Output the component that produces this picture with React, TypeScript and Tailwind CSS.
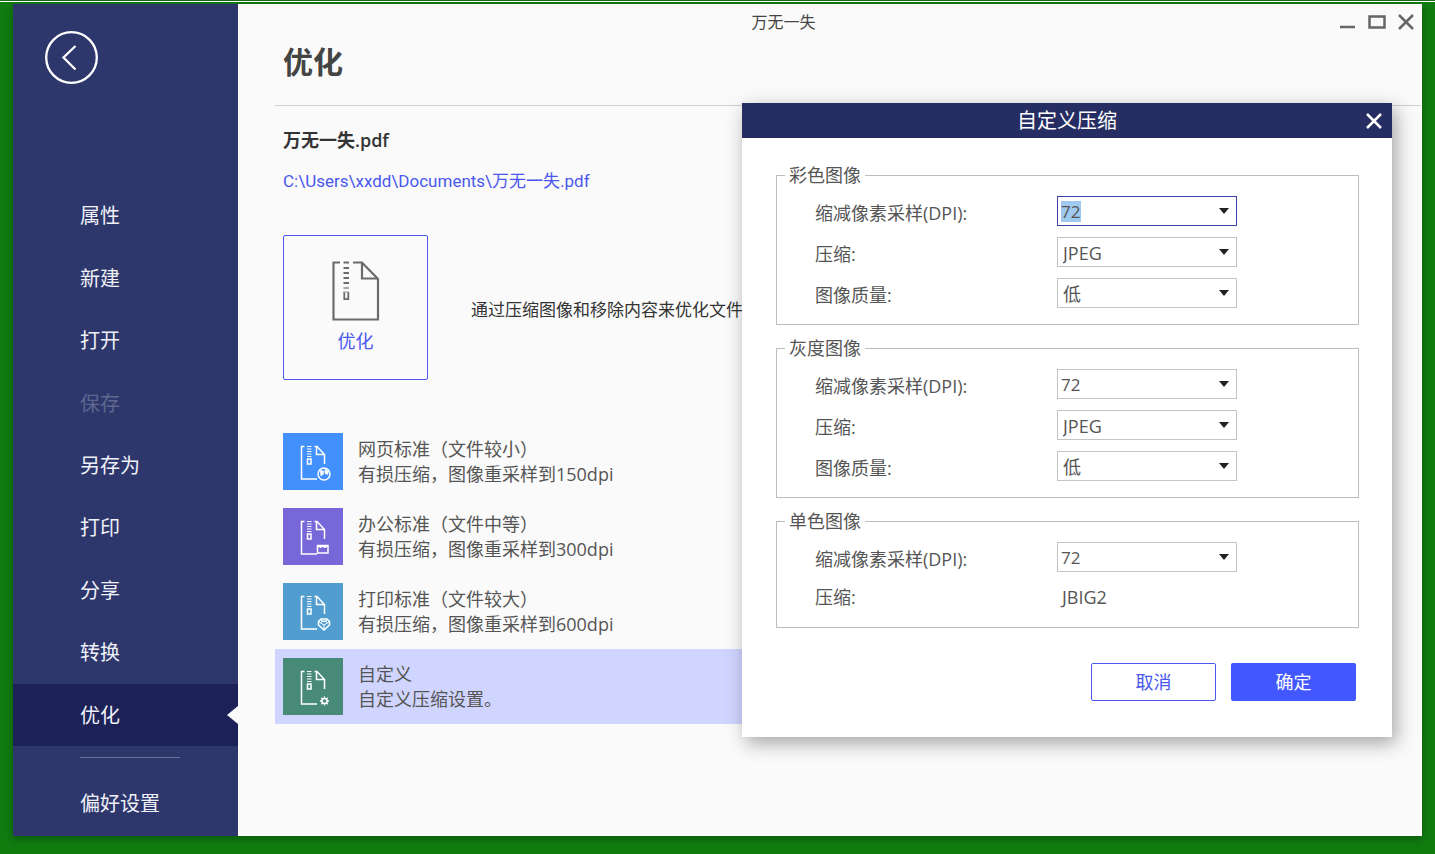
import { useState } from 'react'
import type { ReactNode } from 'react'

const NAV_ITEMS = ['属性', '新建', '打开', '保存', '另存为', '打印', '分享', '转换', '优化']

const PRESETS = [
  { id: 'web', title: '网页标准（文件较小）', desc: '有损压缩，图像重采样到150dpi', tile: 'bg-[#4190fc]' },
  { id: 'office', title: '办公标准（文件中等）', desc: '有损压缩，图像重采样到300dpi', tile: 'bg-[#7767d9]' },
  { id: 'print', title: '打印标准（文件较大）', desc: '有损压缩，图像重采样到600dpi', tile: 'bg-[#529dd0]' },
  { id: 'custom', title: '自定义', desc: '自定义压缩设置。', tile: 'bg-[#488a78]' },
]

const BADGES: Record<string, ReactNode> = {
  web: (
    <>
      <circle cx="41" cy="41" r="6" />
      <path d="M37 37.5l3.5.5v3L38 43zM42 36l3.5 2.5-1 3-2.5-1z" fill="#fff" strokeWidth="0.6" />
    </>
  ),
  office: (
    <>
      <rect x="34.5" y="37.5" width="10.5" height="7.5" />
      <path d="M34.5 38.5h10.5M37.5 38v2M42 38v2" />
    </>
  ),
  print: (
    <>
      <path d="M38 36h6l2.5 2.5V42L41 47l-5.500-5v-3.500z" />
      <path d="M36 39l5 3 5-3M41 42v4M38 37.500l6 1.500M44 37.500l-6 1.500" strokeWidth="1" />
    </>
  ),
  custom: (
    <>
      <circle cx="41.5" cy="43" r="2.5" />
      <path d="M41.5 38.500v2M41.5 45.500v2M37 43h2M44 43h2M38.300 39.800l1.400 1.400M43.300 44.800l1.400 1.400M44.700 39.800l-1.400 1.400M39.700 44.800l-1.400 1.400" strokeWidth="1.3" />
    </>
  ),
}

function PresetIcon({ id }: { id: string }) {
  return (
    <svg width="60" height="57" viewBox="0 0 60 57" fill="none" stroke="#fff" strokeWidth="1.5" aria-hidden="true">
      <path d="M21.5 13.5h-3V46H34" />
      <path d="M31.5 13.5H34l7.5 8V31M33.5 13.5v8h8" />
      <path d="M24 13.5h4.5M24 16h4.5M24 18.5h4.5M24 21h4.5M24 23.5h4.5" strokeWidth="1.2" />
      <rect x="24.5" y="26" width="3.5" height="5" />
      {BADGES[id]}
    </svg>
  )
}

function ZipFileIcon() {
  return (
    <svg width="48" height="60" viewBox="0 0 48 60" fill="none" stroke="#6b6b6b" strokeWidth="2.2" aria-hidden="true">
      <path d="M8 1.5H1.5v57H46V18L30 1.5h-9" />
      <path d="M30 1.5v16h16" />
      <path d="M11.5 1.5H17M11.5 7H17M11.5 12H17M11.5 17H17M11.5 22H17" />
      <path d="M11.5 27H17" stroke="#aaa" />
      <path d="M12.3 31v8M16.3 31v8M11.5 38.2H17" strokeWidth="1.8" />
      <path d="M11.5 31H17" stroke="#999" strokeWidth="1" />
    </svg>
  )
}

function Field({ id, label, options, active }: { id: string; label: string; options: string[]; active?: boolean }) {
  return (
    <div className="flex h-[30px] items-center">
      <label htmlFor={id} className="w-[242px] pt-1">{label}</label>
      <div className={`relative h-[30px] w-[180px] border bg-white ${active ? 'border-[#3d41a8]' : 'border-[#c3c3c3]'}`}>
        {active && <span className="absolute top-1 left-[3px] h-[21px] w-5 bg-[#9fc9ee]" />}
        <select id={id} className={`relative h-full w-full appearance-none bg-transparent pt-[2px] outline-none ${options[0] === '72' ? 'pl-[3px] text-[17px]' : 'pl-[5px]'}`}>
          {options.map(o => <option key={o}>{o}</option>)}
        </select>
        <svg className="pointer-events-none absolute top-[11px] right-[7px]" width="10" height="6" viewBox="0 0 10 6" aria-hidden="true">
          <path d="M0 0h10L5 6z" fill="#222" />
        </svg>
      </div>
    </div>
  )
}

function Group({ title, children }: { title: string; children: ReactNode }) {
  return (
    <fieldset className="border border-[#bdbdbd] pr-4 pb-4 pl-[38px]">
      <legend className="-ml-[30px] px-1 leading-[26px]">{title}</legend>
      <div className="flex flex-col gap-[11px] pt-2">{children}</div>
    </fieldset>
  )
}

function CompressDialog() {
  return (
    <div role="dialog" aria-label="自定义压缩" className="absolute top-[99px] right-[29px] w-[650px] bg-white text-[#555] shadow-[4px_6px_18px_rgba(0,0,0,0.35)]">
      <div className="flex h-[35px] items-center bg-[#262d63] pr-2 text-white">
        <h2 className="flex-1 pl-7 text-center text-[20px]">自定义压缩</h2>
        <button aria-label="关闭" className="flex h-6 w-5 items-center justify-center">
          <svg width="16" height="16" viewBox="0 0 16 16" fill="none" stroke="#fff" strokeWidth="2.5">
            <path d="M1 1l14 14M15 1L1 15" />
          </svg>
        </button>
      </div>
      <div className="flex flex-col gap-[10px] pt-6 pr-[33px] pl-[34px]">
        <Group title="彩色图像">
          <Field id="color-dpi" label="缩减像素采样(DPI):" options={['72', '150', '300']} active />
          <Field id="color-comp" label="压缩:" options={['JPEG', 'ZIP']} />
          <Field id="color-quality" label="图像质量:" options={['低', '中', '高']} />
        </Group>
        <Group title="灰度图像">
          <Field id="gray-dpi" label="缩减像素采样(DPI):" options={['72', '150', '300']} />
          <Field id="gray-comp" label="压缩:" options={['JPEG', 'ZIP']} />
          <Field id="gray-quality" label="图像质量:" options={['低', '中', '高']} />
        </Group>
        <Group title="单色图像">
          <Field id="mono-dpi" label="缩减像素采样(DPI):" options={['72', '150', '300']} />
          <div className="flex h-7 items-center">
            <span className="w-[242px]">压缩:</span>
            <span className="pl-[5px]">JBIG2</span>
          </div>
        </Group>
      </div>
      <div className="flex justify-end gap-[15px] pt-[35px] pr-9 pb-9">
        <button className="h-[38px] w-[125px] rounded-xs border border-[#4a58ee] bg-white text-[#4a58ee]">取消</button>
        <button className="h-[38px] w-[125px] rounded-xs bg-[#4257ff] text-white">确定</button>
      </div>
    </div>
  )
}

export default function App() {
  const [page, setPage] = useState('优化')
  const [preset, setPreset] = useState('custom')

  return (
    <div className="flex min-h-screen flex-col bg-[#107c10] pb-[18px] font-['Open_Sans','Noto_Sans_CJK_SC',sans-serif] text-[18px] text-[#444]">
      <div className="h-[2px] border-t border-[#1c6b1c] bg-white" />
      <div className="mx-[13px] mt-[2px] flex flex-1 shadow-[0_3px_8px_rgba(0,0,0,0.3)]">
        {/* Sidebar */}
        <aside className="flex w-[225px] shrink-0 flex-col bg-[#2d376c] text-[20px] text-[#f0f1f8]">
          <button aria-label="返回" className="mt-[27px] ml-8 h-[53px] w-[53px]">
            <svg width="53" height="53" viewBox="0 0 53 53" fill="none" stroke="#fff">
              <circle cx="26.5" cy="26.5" r="25.3" strokeWidth="2.3" />
              <path d="M30.5 15l-12 11.5 12 12" strokeWidth="2.3" />
            </svg>
          </button>
          <nav className="mt-[100px] flex h-[562px] flex-col">
            {NAV_ITEMS.map(item => (
              <button
                key={item}
                disabled={item === '保存'}
                onClick={() => setPage(item)}
                className={`relative flex-1 pt-[2px] pl-[67px] text-left disabled:text-[#5f678f] ${page === item ? 'bg-[#1c2257]' : ''}`}
              >
                {item}
                {page === item && (
                  <svg className="absolute top-1/2 right-0 -translate-y-1/2" width="11" height="18" viewBox="0 0 11 18">
                    <path d="M11 0v18L0 9z" fill="#fafafa" />
                  </svg>
                )}
              </button>
            ))}
          </nav>
          <hr className="mt-[11px] ml-[67px] w-[100px] border-[#6b7398]" />
          <button className="mt-[31px] pl-[67px] text-left">偏好设置</button>
        </aside>

        {/* Content */}
        <main className="relative min-w-0 flex-1 border-r border-b border-white bg-[#fafafa] pl-[37px]">
          <header className="-ml-[37px] flex h-[35px] items-center">
            <div className="flex-1 text-center text-[16px]">万无一失</div>
            <div className="flex w-[92px] items-center justify-end gap-3 pr-[7px] text-[#666]">
              <button aria-label="最小化">
                <svg width="16" height="18" viewBox="0 0 16 18" stroke="currentColor" strokeWidth="2.5"><path d="M0 14h15" /></svg>
              </button>
              <button aria-label="最大化">
                <svg width="18" height="18" viewBox="0 0 18 18" fill="none" stroke="currentColor" strokeWidth="2.5"><rect x="1.5" y="3.5" width="15" height="11" /></svg>
              </button>
              <button aria-label="关闭窗口">
                <svg width="16" height="18" viewBox="0 0 16 18" stroke="currentColor" strokeWidth="2.5"><path d="M1 2l14 14M15 2L1 16" /></svg>
              </button>
            </div>
          </header>
          <h1 className="h-[66px] pl-2 text-[30px] leading-[46px] font-bold">优化</h1>
          <hr className="border-[#cfcfcf]" />

          <div className="pl-2">
            <h2 className="mt-[22px] leading-6 font-semibold text-[#333]">万无一失.pdf</h2>
            <a href="#file" className="mt-[17px] block font-['Roboto','Noto_Sans_CJK_SC',sans-serif] text-[17px] leading-6 text-[#4a58ee]">C:\Users\xxdd\Documents\万无一失.pdf</a>
            <div className="mt-[42px] flex items-center gap-[43px]">
              <button className="flex h-[145px] w-[145px] shrink-0 flex-col items-center rounded-xs border border-[#4a58ee] pt-[25px] text-[#4a58ee]">
                <ZipFileIcon />
                <span className="mt-2 leading-6">优化</span>
              </button>
              <p className="overflow-hidden pt-1 text-[17px] whitespace-nowrap text-[#333]">通过压缩图像和移除内容来优化文件。</p>
            </div>
          </div>

          <div className="mt-11 max-w-[800px]">
            {PRESETS.map(p => (
              <button
                key={p.id}
                onClick={() => setPreset(p.id)}
                className={`flex h-[75px] w-full items-center gap-[15px] pl-2 text-left ${preset === p.id ? 'bg-[#d0d5ff]' : ''}`}
              >
                <span className={`h-[57px] w-[60px] ${p.tile}`}><PresetIcon id={p.id} /></span>
                <span className="leading-[25px] text-[#555]">
                  <span className="block">{p.title}</span>
                  <span className="block">{p.desc}</span>
                </span>
              </button>
            ))}
          </div>

          <CompressDialog />
        </main>
      </div>
    </div>
  )
}
